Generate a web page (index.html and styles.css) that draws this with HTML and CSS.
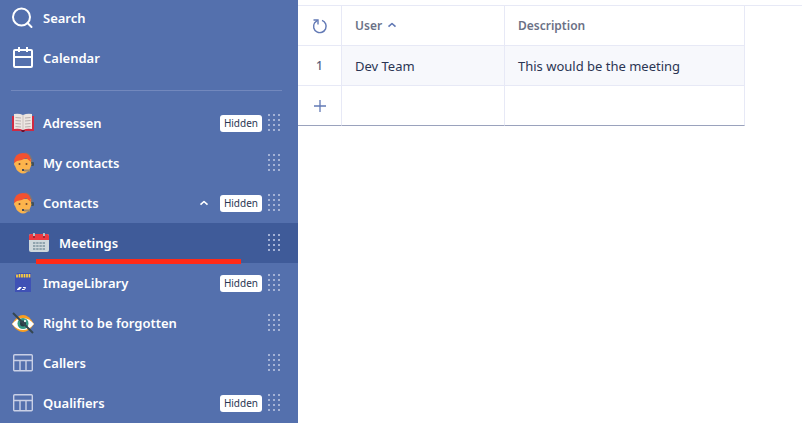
FILE: index.html
```html
<!DOCTYPE html>
<html lang="en">
<head>
<meta charset="utf-8">
<meta name="viewport" content="width=device-width, initial-scale=1">
<title>Meetings</title>
<link rel="stylesheet" href="styles.css">
</head>
<body>
<svg class="sprite" aria-hidden="true">
  <symbol id="i-search" viewBox="0 0 24 24"><g fill="none" stroke="#fff" stroke-width="2" stroke-linecap="round"><circle cx="10.500" cy="11" r="8.500"/><path d="M16.500 17L20.500 21"/></g></symbol>
  <symbol id="i-calendar" viewBox="0 0 24 24"><g fill="none" stroke="#fff" stroke-width="2"><rect x="3" y="4" width="18" height="17" rx="1"/><path d="M3 11H21M8 1V6M16 1V6"/></g></symbol>
  <symbol id="i-book" viewBox="0 0 24 24"><path d="M1 5H23V20H14L13 21H11L10 20H1Z" fill="#d02a42"/><path d="M10 19H14L13 21H11Z" fill="#6d1230"/><path d="M3 3Q8 2 12 4Q16 2 21 3V18Q16 17 12 19Q8 17 3 18Z" fill="#ece5e1"/><path d="M12 4V19" stroke="#cbc1bf"/><path d="M4.500 6.500L10 7M4.500 9.500L10 10M4.500 12.500L10 13M4.500 15.500L10 16M14 7L19.500 6.500M14 10L19.500 9.500M14 13L19.500 12.500M14 16L19.500 15.500" stroke="#b8afae" fill="none"/></symbol>
  <symbol id="i-agent" viewBox="0 0 24 24"><path d="M14 2Q21 3 21 12" fill="none" stroke="#77777c" stroke-width="1.500"/><rect x="20" y="11" width="3" height="4" rx="1" fill="#41505a"/><path d="M4 8H20V12Q21 13 20 15Q19 19 16 21Q12 24 8 21Q5 19 4 15Q2 13 4 11Z" fill="#fcb44c"/><path d="M3 12Q3 2 12 2Q20 2 20 11L15 7Q10 10 6 10Z" fill="#f4512f"/><circle cx="8.500" cy="13" r="1" fill="#704832"/><circle cx="15.500" cy="13" r="1" fill="#704832"/><path d="M19 19.500H13" fill="none" stroke="#a08a6c" stroke-width="2"/><rect x="11" y="18" width="2" height="2" fill="#434a58"/></symbol>
  <symbol id="i-meetings" viewBox="0 0 24 24"><rect x="2" y="3" width="20" height="18" rx="2" fill="#cfd8dc"/><path d="M2 9V5Q2 3 4 3H20Q22 3 22 5V9Z" fill="#ee3941"/><path d="M7 2V6M17 2V6" stroke="#b0bec5" stroke-width="2"/><path d="M6 5H8V7H6ZM16 5H18V7H16Z" fill="#a42833"/><path d="M6 12H18M6 15H18M6 18H18" stroke="#90a4ae" stroke-width="2" stroke-dasharray="2.400 .8"/></symbol>
  <symbol id="i-card" viewBox="0 0 24 24"><path d="M4 5L6 2H20V21H4Z" fill="#3f51b5"/><path d="M6 3.500V6.500M8.500 3V6.500M11 3V6.500M13.500 3V6.500M16 3V6.500M18.500 3V6.500" stroke="#ffd33d" stroke-width="1.700"/><path d="M10.500 16.500H8L7 17.500H9.500L8.500 18.500H6M12 16.500H14.500L13.500 18.500H11" fill="none" stroke="#fff"/></symbol>
  <symbol id="i-eye" viewBox="0 0 24 24"><path d="M1 13Q6 4 12 4Q18 4 23 13Q18 21 12 21Q6 21 1 13Z" fill="#fa9e20"/><path d="M1 13Q6 7 12 7Q18 7 23 13Q18 19 12 19Q6 19 1 13Z" fill="#fff"/><circle cx="12" cy="12.500" r="5.500" fill="#359884"/><circle cx="12" cy="12.500" r="3" fill="#263c46"/><circle cx="14" cy="10" r="1.200" fill="#d9ece7"/><path d="M2 2L22 22" stroke="#344650" stroke-width="2"/></symbol>
  <symbol id="i-table" viewBox="0 0 24 24"><g fill="none" stroke="#c9d0e6" stroke-width="1.400"><rect x="2.700" y="3.700" width="18.600" height="16" rx="1"/><path d="M3 9.500H21M9 9.500V19.500M15 9.500V19.500"/></g></symbol>
  <symbol id="i-up" viewBox="0 0 10 10"><path d="M1.500 6.700L5 3.500L8.500 6.700" fill="none" stroke="currentColor" stroke-width="1.600" stroke-linejoin="round"/></symbol>
  <symbol id="i-grip" viewBox="0 0 12 17"><path d="M1 0V17M6 0V17M11 0V17" stroke="#a4b2d6" stroke-width="2" stroke-dasharray="2 3"/></symbol>
  <symbol id="i-refresh" viewBox="0 0 16 16"><g fill="none" stroke="#6279b5" stroke-width="1.400"><path d="M10 2.400A6.300 6.300 0 1 1 2.500 5L5.500 2.200"/><path d="M1.500 2H6V6.500"/></g></symbol>
  <symbol id="i-plus" viewBox="0 0 12 12"><path d="M6 0V12M0 6H12" stroke="#6279b5" stroke-width="1.300"/></symbol>
</svg>
<div class="app">
  <nav class="sidebar" aria-label="Main">
    <ul class="menu menu-top">
      <li class="item"><a class="link" href="#"><svg class="icon"><use href="#i-search"/></svg>Search</a></li>
      <li class="item"><a class="link" href="#"><svg class="icon"><use href="#i-calendar"/></svg>Calendar</a></li>
    </ul>
    <hr class="divider">
    <ul class="menu">
      <li class="item"><a class="link" href="#"><svg class="icon"><use href="#i-book"/></svg>Adressen</a><span class="badge">Hidden</span><svg class="grip"><use href="#i-grip"/></svg></li>
      <li class="item"><a class="link" href="#"><svg class="icon"><use href="#i-agent"/></svg>My contacts</a><svg class="grip"><use href="#i-grip"/></svg></li>
      <li class="item"><a class="link" href="#"><svg class="icon"><use href="#i-agent"/></svg>Contacts</a><button class="toggle" type="button" aria-label="Collapse Contacts"><svg class="chevron"><use href="#i-up"/></svg></button><span class="badge">Hidden</span><svg class="grip"><use href="#i-grip"/></svg></li>
      <li class="item item-child item-active"><a class="link" href="#" aria-current="page"><svg class="icon"><use href="#i-meetings"/></svg>Meetings</a><svg class="grip"><use href="#i-grip"/></svg></li>
      <li class="item"><a class="link" href="#"><svg class="icon"><use href="#i-card"/></svg>ImageLibrary</a><span class="badge">Hidden</span><svg class="grip"><use href="#i-grip"/></svg></li>
      <li class="item"><a class="link" href="#"><svg class="icon"><use href="#i-eye"/></svg>Right to be forgotten</a><svg class="grip"><use href="#i-grip"/></svg></li>
      <li class="item"><a class="link" href="#"><svg class="icon"><use href="#i-table"/></svg>Callers</a><svg class="grip"><use href="#i-grip"/></svg></li>
      <li class="item"><a class="link" href="#"><svg class="icon"><use href="#i-table"/></svg>Qualifiers</a><span class="badge">Hidden</span><svg class="grip"><use href="#i-grip"/></svg></li>
    </ul>
  </nav>
  <main class="content">
    <table class="grid">
      <thead>
        <tr><th class="col-num"><button class="tool" type="button" aria-label="Refresh"><svg class="refresh"><use href="#i-refresh"/></svg></button></th><th class="col-user" scope="col">User<svg class="chevron sort"><use href="#i-up"/></svg></th><th class="col-desc" scope="col">Description</th></tr>
      </thead>
      <tbody>
        <tr class="record"><td class="col-num">1</td><td>Dev Team</td><td>This would be the meeting</td></tr>
        <tr class="new"><td class="col-num"><button class="tool" type="button" aria-label="Add row"><svg class="plus"><use href="#i-plus"/></svg></button></td><td></td><td></td></tr>
      </tbody>
    </table>
  </main>
</div>
</body>
</html>
```
FILE: styles.css
```css
* { box-sizing: border-box; }
body {
  margin: 0;
  background: #fff;
  color: #2b3553;
  font-family: "Noto Sans", sans-serif;
  font-size: 13px;
  line-height: 20px;
}
svg { display: block; flex: none; }
.sprite { position: absolute; width: 0; height: 0; }
.app { display: flex; height: 100vh; overflow: hidden; }

.sidebar { flex: 0 0 298px; background: #5470ad; overflow: hidden; }
.menu { margin: 0; padding: 0; list-style: none; }
.menu-top { margin-top: -2px; }
.item {
  position: relative;
  display: flex;
  align-items: center;
  height: 40px;
  padding: 0 18px 0 11px;
}
.item-child { padding-left: 27px; }
.item-active { background: #3f5b99; }
.item-active::after {
  content: "";
  position: absolute;
  z-index: 1;
  left: 36px;
  right: 57px;
  bottom: -1px;
  height: 5px;
  background: #ff2a17;
}
.link {
  display: flex;
  align-items: center;
  flex: 1;
  gap: 8px;
  color: #fff;
  font-weight: 600;
  text-decoration: none;
}
.icon { width: 24px; height: 24px; }
.divider { height: 1px; margin: 12px 16px 12px 11px; border: 0; background: #7288bd; }
.badge {
  padding: 0 4px;
  border-radius: 3px;
  background: #fff;
  color: #2b3553;
  font-size: 10px;
  line-height: 17px;
}
.grip { width: 12px; height: 17px; margin: 0 0 2px 6px; }
.toggle, .tool { padding: 0; border: 0; background: none; color: inherit; }
.toggle { margin-right: 11px; color: #fff; }
.chevron { width: 10px; height: 10px; }

.content { flex: 1; margin-top: 5px; border-top: 1px solid #e7e9f6; }
.grid { width: 447px; table-layout: fixed; border-collapse: separate; border-spacing: 0; }
.grid th, .grid td {
  height: 40px;
  padding: 0 13px;
  border-right: 1px solid #e7e9f6;
  border-bottom: 1px solid #e7e9f6;
  text-align: left;
}
.grid th { color: #6b7186; font-size: 12px; font-weight: 600; }
.grid .col-num { width: 44px; padding: 0; background: #fff; color: #59617d; font-size: 12px; font-weight: 500; text-align: center; }
.col-user { width: 163px; }
.record td { background: #f7f8fc; }
.grid .new td { border-bottom-color: #9aa2bd; }
.tool { display: block; margin: 0 auto; }
.refresh { width: 16px; height: 16px; }
.plus { width: 12px; height: 12px; }
.sort { display: inline-block; margin-left: 5px; color: #6279b5; }
```
